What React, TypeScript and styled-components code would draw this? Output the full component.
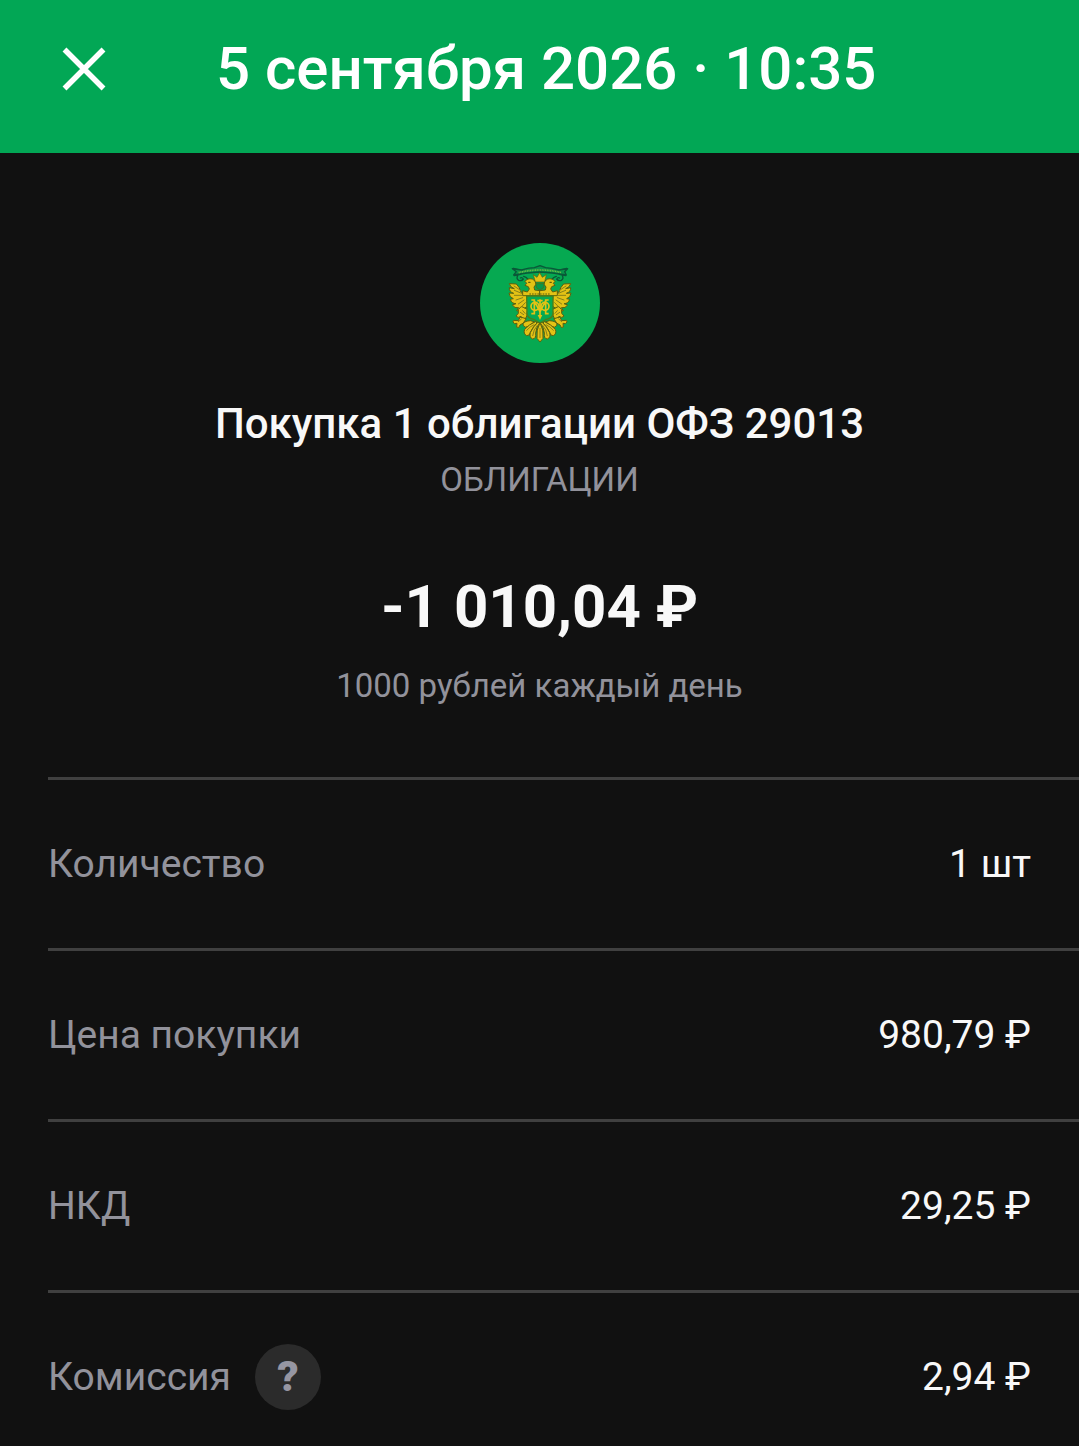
import React from "react";
import styled, { createGlobalStyle } from "styled-components";

const GlobalStyle = createGlobalStyle`
  * { box-sizing: border-box; }
  html, body, #root { height: 100%; }
  body {
    margin: 0;
    background: #111111;
    font-family: Roboto, "Noto Sans", sans-serif;
  }
`;

const Page = styled.div`
  height: 100%;
  overflow: auto;
  scrollbar-width: none;
  background: #111111;
  color: #f8f8f8;
`;

const TopBar = styled.header`
  display: flex;
  align-items: center;
  gap: 96px;
  padding: 33px 48px 48px;
  background: #02a755;
  color: #ffffff;
`;

const CloseButton = styled.button`
  display: grid;
  place-items: center;
  flex: none;
  width: 72px;
  height: 72px;
  margin: 0;
  padding: 0;
  border: 0;
  background: none;
  color: inherit;
  cursor: pointer;
`;

const BarTitle = styled.h1`
  margin: 0;
  font-size: 60px;
  line-height: 72px;
  font-weight: 500;
`;

const Summary = styled.section`
  display: flex;
  flex-direction: column;
  align-items: center;
  padding: 90px 48px 63px;
  text-align: center;
`;

const Operation = styled.h2`
  margin: 33px 0 0;
  font-size: 42px;
  line-height: 56px;
  font-weight: 500;
`;

const Caption = styled.p`
  margin: 0;
  color: #92929b;
  font-size: 33px;
  line-height: 56px;
`;

const Amount = styled.p`
  margin: 63px 0 15px;
  font-size: 60px;
  line-height: 72px;
  font-weight: 700;
`;

const Details = styled.dl`
  margin: 0;
  padding-left: 48px;
`;

const Row = styled.div`
  display: flex;
  align-items: center;
  justify-content: space-between;
  min-height: 171px;
  padding-right: 48px;
  border-top: 3px solid #404040;
  font-size: 39px;
  line-height: 48px;
`;

const Label = styled.dt`
  display: flex;
  align-items: center;
  gap: 24px;
  color: #92929b;
`;

const Value = styled.dd`
  margin: 0;
`;

const HelpButton = styled.button`
  display: grid;
  place-items: center;
  width: 66px;
  height: 66px;
  padding: 0;
  border: 0;
  border-radius: 50%;
  background: #2b2b2b;
  color: #9696a2;
  font: 900 42px/48px Roboto, "Noto Sans", sans-serif;
  cursor: pointer;
`;

const CloseIcon = () => (
  <svg width="44" height="44" viewBox="0 0 44 44" fill="none" stroke="currentColor" strokeWidth="5.5" aria-hidden="true">
    <path d="M2.5 2.5 41.5 41.5M41.5 2.5 2.5 41.5" />
  </svg>
);

const GOLD = "#e3c215";
const EDGE = "#5f5f0c";
const FEATHER = "#86801a";

/* Left half of the double-headed eagle; the right half is its mirror image. */
const EagleHalf = () => (
  <g strokeLinejoin="round" strokeLinecap="round">
    <path d="M130 106 155 112 152 124 133 128 141 116Z" fill="#07924a" stroke="#0b5637" strokeWidth="4" />
    <path d="M143 128q-5 9 3 14q9 3 14-4q-4-6-9-3M161 130q9 2 13 9" fill="none" stroke="#0b5637" strokeWidth="4" />
    <g fill={GOLD} stroke={EDGE} strokeWidth="3">
      <path d="M170 186 153 177 147 163 139 153 118 152Q120 162 133 167L118 164Q117 176 131 181L117 180Q118 193 130 197L121 199Q125 212 138 212L127 216Q134 227 146 224L140 233Q149 237 158 230L172 220Z" />
      <path d="M210 188H158V173L172 177 178 168 175 161 165 157 170 151 165 145Q172 135 187 138Q198 142 198 154L192 162 194 171 210 173Z" />
      <path d="M153 221Q141 229 145 241L138 249Q144 257 153 250L160 260Q172 255 171 240L173 230Z" />
      <path d="M150 253 145 263 131 262Q125 267 134 272L141 271 140 282Q147 288 150 276L160 270 168 258Z" />
      <path d="M181 263Q158 264 159 277Q165 287 177 279L192 267Z" />
      <path d="M196 266Q177 274 164 289Q159 302 170 308Q179 309 181 298Q186 286 200 271Z" />
      <path d="M203 268Q190 280 181 299Q177 314 188 318Q199 317 197 300Q198 285 208 271Z" />
    </g>
    <path d="M132 159 153 173M133 172 155 181M133 187 155 187M138 201 158 194M145 213 162 201M153 223 166 209M151 238 161 245M158 233 165 241M145 266 154 258M170 292Q180 280 192 275M188 308Q190 290 202 277" fill="none" stroke={FEATHER} strokeWidth="3" />
    <path d="M176 148h4" stroke={EDGE} strokeWidth="4" />
  </g>
);

const TreasuryEmblem = () => (
  <svg width="120" height="120" viewBox="30 30 360 360" role="img" aria-label="ОФЗ">
    <circle cx="210" cy="210" r="180" fill="#06a951" />
    <EagleHalf />
    <g transform="translate(420 0) scale(-1 1)">
      <EagleHalf />
    </g>
    <path d="M127 107 155 111Q180 104 193 104L210 98 227 104Q244 105 267 111L293 107 284 116 289 126Q246 119 210 117Q173 119 131 126L139 116Z" fill="#079449" stroke="#0a5838" strokeWidth="4" strokeLinejoin="round" />
    <path d="M146 119Q210 103 275 119" fill="none" stroke="#74bd45" strokeWidth="5" strokeDasharray="3 2" />
    <path d="M196 147 190 125 201 133 209 119 217 133 229 125 224 147Z" fill={GOLD} stroke={EDGE} strokeWidth="2" strokeLinejoin="round" />
    <path d="M197 152H223L220 165 210 171 200 165Z" fill="#08984a" stroke={EDGE} strokeWidth="2" />
    <path d="M170 189H249V242Q248 256 229 259L210 270 191 259Q172 256 171 242Z" fill="#06a951" stroke="#4d7d18" strokeWidth="4" strokeLinejoin="round" />
    <path d="M178 183H241" stroke={EDGE} strokeWidth="3" strokeDasharray="5 3" />
    <g fill="none" stroke={GOLD} strokeWidth="5">
      <path d="M184 201h9V242h-9M236 201h-9V242h9M192 202 210 236 228 202M210 199V250M202 203h16" />
      <ellipse cx="195" cy="220" rx="12" ry="12" />
      <ellipse cx="225" cy="220" rx="12" ry="12" />
    </g>
    <path d="M203 246 210 261 217 246Z" fill={GOLD} />
    <path d="M210 269Q198 290 201 316L210 327 219 316Q222 290 210 269Z" fill={GOLD} stroke={EDGE} strokeWidth="3" />
    <path d="M210 285V315" stroke={FEATHER} strokeWidth="3" />
  </svg>
);

const details = [
  { label: "Количество", value: "1 шт" },
  { label: "Цена покупки", value: "980,79 ₽" },
  { label: "НКД", value: "29,25 ₽" },
  { label: "Комиссия", value: "2,94 ₽", help: true },
];

export default function App() {
  return (
    <Page>
      <GlobalStyle />
      <TopBar>
        <CloseButton type="button" aria-label="Закрыть">
          <CloseIcon />
        </CloseButton>
        <BarTitle>5 сентября 2026 · 10:35</BarTitle>
      </TopBar>
      <main>
        <Summary>
          <TreasuryEmblem />
          <Operation>Покупка 1 облигации ОФЗ 29013</Operation>
          <Caption>ОБЛИГАЦИИ</Caption>
          <Amount>-1 010,04 ₽</Amount>
          <Caption>1000 рублей каждый день</Caption>
        </Summary>
        <Details>
          {details.map(({ label, value, help }) => (
            <Row key={label}>
              <Label>
                {label}
                {help && (
                  <HelpButton type="button" aria-label="О комиссии">
                    ?
                  </HelpButton>
                )}
              </Label>
              <Value>{value}</Value>
            </Row>
          ))}
        </Details>
      </main>
    </Page>
  );
}
